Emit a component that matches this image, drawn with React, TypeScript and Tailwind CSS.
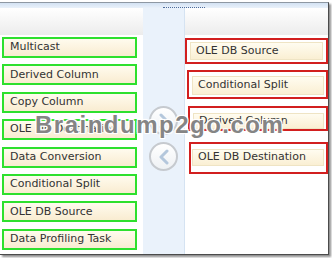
import React from "react";

const leftItems = [
  "Multicast",
  "Derived Column",
  "Copy Column",
  "OLE DB Destination",
  "Data Conversion",
  "Conditional Split",
  "OLE DB Source",
  "Data Profiling Task",
];

const font = "font-['DejaVu_Sans','Verdana',sans-serif]";

function Chevron({ dir }: { dir: "left" | "right" }) {
  return (
    <div className="w-[29px] h-[29px] rounded-full border-2 border-[#c6cacf] bg-gradient-to-b from-white to-[#eef1f4] flex items-center justify-center">
      <svg width="14" height="16" viewBox="0 0 14 16">
        {dir === "right" ? (
          <path d="M4 2 L10 8 L4 14" fill="none" stroke="#b4c7dc" strokeWidth="3" strokeLinecap="round" strokeLinejoin="round" />
        ) : (
          <path d="M10 2 L4 8 L10 14" fill="none" stroke="#b4c7dc" strokeWidth="3" strokeLinecap="round" strokeLinejoin="round" />
        )}
      </svg>
    </div>
  );
}

function Item({ label, h }: { label: string; h: string }) {
  return (
    <div
      className={`${h} border border-[#efe4c4] bg-gradient-to-b from-[#fffcf0] to-[#faefd3] flex items-center pl-[5px] text-[11px] text-[#333] ${font} whitespace-nowrap`}
    >
      {label}
    </div>
  );
}

export default function App() {
  return (
    <div className="w-[332px] h-[258px] bg-white relative overflow-hidden">
      <div className="mt-[2px] w-[329px] h-[253px] border-t border-t-[#8e98a3] border-r border-b border-r-[#4b4b4b] border-b-[#4b4b4b] shadow-[2px_2px_2px_rgba(0,0,0,0.45)] flex flex-col bg-white">
        {/* top band */}
        <div className="h-[5px] bg-gradient-to-b from-[#d3e2f3] to-[#e9f1fa] flex">
          <div className="ml-[163px] w-[42px] h-full border-b border-dotted border-[#4d6c9c]" />
        </div>
        <div className="flex flex-1">
          {/* left panel */}
          <div className="w-[143px] flex flex-col">
            <div className="h-[27px] bg-gradient-to-b from-white to-[#ececec]" />
            <div className="pt-[2px] pl-[2px] flex flex-col gap-[6.4px]">
              {leftItems.map((t) => (
                <div
                  key={t}
                  className={`w-[135px] h-[21px] border-2 border-[#2ee02e] bg-gradient-to-b from-[#fffbee] to-[#f9ecd1] flex items-center pl-[6px] text-[11px] text-[#333] ${font} whitespace-nowrap`}
                >
                  {t}
                </div>
              ))}
            </div>
          </div>
          {/* middle column */}
          <div className="w-[42px] bg-[#eaf2fb] border-r border-[#d5e3f2] flex flex-col items-center pt-[98px] gap-[7px]">
            <Chevron dir="right" />
            <Chevron dir="left" />
          </div>
          {/* right panel */}
          <div className="w-[143px] flex flex-col">
            <div className="h-[27px] bg-gradient-to-b from-white to-[#ececec]" />
            <div className="mt-[3px] h-[26px] border-2 border-[#d21f1f] pt-[2px] pb-[2px] pl-[3px] pr-[3px]">
              <Item label="OLE DB Source" h="h-[18px]" />
            </div>
            <div className="mt-[6px] ml-[2px] h-[29px] border-2 border-[#d21f1f] pt-[4px] pl-[3px] pr-[2px]">
              <Item label="Conditional Split" h="h-[19px]" />
            </div>
            <div className="mt-[7px] ml-[3px] h-[25px] border-2 border-[#d21f1f] pt-[5px] pl-[3px] pr-[2px]">
              <Item label="Derived Column" h="h-[16px]" />
            </div>
            <div className="mt-[11px] ml-[4px] h-[32px] border-2 border-[#d21f1f] pt-[5px] pl-[1px] pr-[2px]">
              <Item label="OLE DB Destination" h="h-[17px]" />
            </div>
          </div>
        </div>
      </div>
      {/* watermark */}
      <div className="absolute left-[35px] top-[113px] text-[24px] leading-[24px] font-bold tracking-[1.5px] text-[#858585] font-['Liberation_Sans',Arial,sans-serif] whitespace-nowrap [text-shadow:-1px_-1px_0_#fff,1px_-1px_0_#fff,-1px_1px_0_#fff,1px_1px_0_#fff,0_0_3px_#fff]">
        Braindump2go.com
      </div>
    </div>
  );
}
